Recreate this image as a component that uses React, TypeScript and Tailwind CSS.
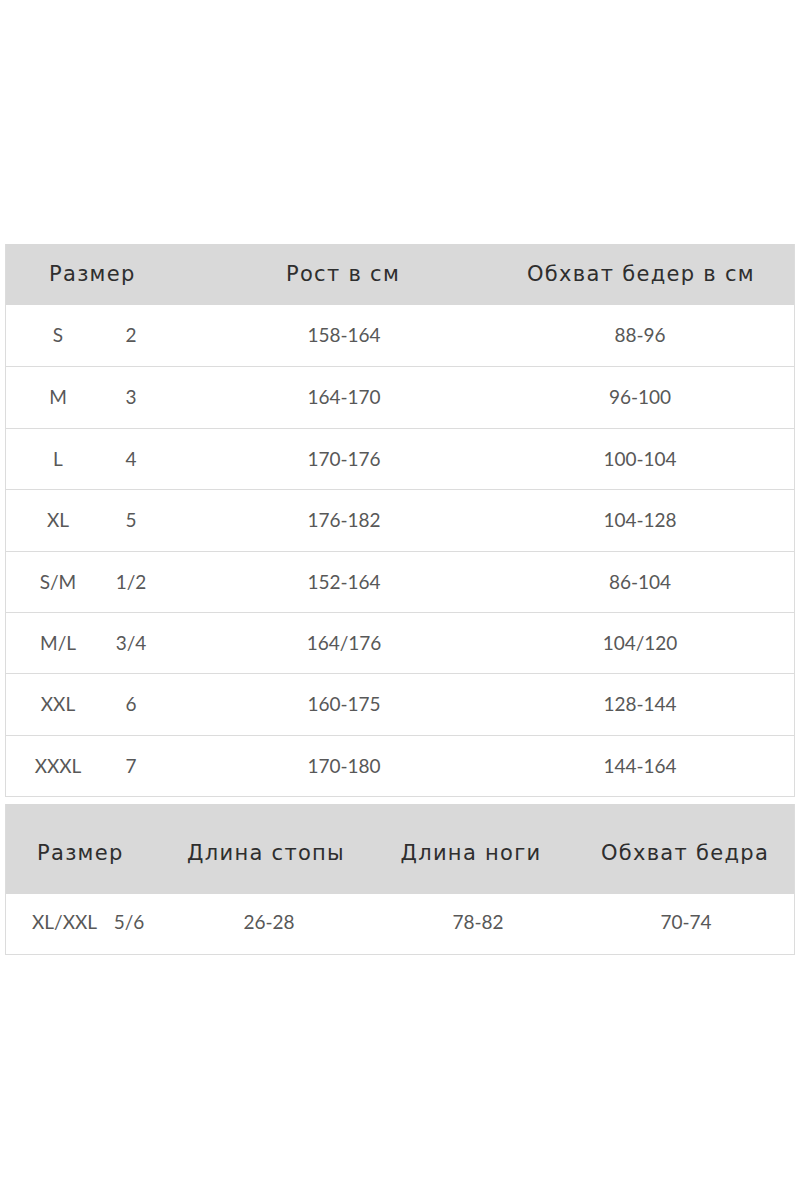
const rows = [
  { size: "S", num: "2", height: "158-164", hips: "88-96" },
  { size: "M", num: "3", height: "164-170", hips: "96-100" },
  { size: "L", num: "4", height: "170-176", hips: "100-104" },
  { size: "XL", num: "5", height: "176-182", hips: "104-128" },
  { size: "S/M", num: "1/2", height: "152-164", hips: "86-104" },
  { size: "M/L", num: "3/4", height: "164/176", hips: "104/120" },
  { size: "XXL", num: "6", height: "160-175", hips: "128-144" },
  { size: "XXXL", num: "7", height: "170-180", hips: "144-164" },
];

const head = "font-['DejaVu_Sans',sans-serif] text-[21px] text-[#2e2e2e] tracking-[1.3px] whitespace-nowrap";
const cell = "font-['Lato',sans-serif] text-[19px] text-[#585858]";

export default function App() {
  return (
    <div className="w-[800px] h-[1200px] bg-white pt-[244px] px-[5px]">
      {/* first table */}
      <div className="w-[790px] border-x border-b border-[#dcdcdc]">
        <div className={`grid grid-cols-[140px_380px_270px] h-[61px] items-center bg-[#d9d9d9] ${head}`}>
          <div className="pl-[43px]">Размер</div>
          <div className="text-center pl-[14px]">Рост в см</div>
          <div className="text-center pr-[40px]">Обхват бедер в см</div>
        </div>
        {rows.map((r, i) => (
          <div
            key={r.size}
            className={`grid grid-cols-[106px_44px_380px_210px] h-[61.4px] items-center ${cell} ${i > 0 ? "border-t border-[#dcdcdc]" : ""}`}
          >
            <div className="text-center pr-[2px]">{r.size}</div>
            <div className="text-center pr-[6px]">{r.num}</div>
            <div className="text-center pr-[4px]">{r.height}</div>
            <div className="text-center pr-[2px]">{r.hips}</div>
          </div>
        ))}
      </div>

      {/* second table */}
      <div className="w-[790px] mt-[7px] border-x border-b border-[#dcdcdc]">
        <div className={`grid grid-cols-[160px_204px_204px_222px] h-[90px] items-center pt-[10px] bg-[#d9d9d9] ${head}`}>
          <div className="pl-[31px]">Размер</div>
          <div className="text-center pr-[4px]">Длина стопы</div>
          <div className="text-center pr-[2px]">Длина ноги</div>
          <div className="text-center">Обхват бедра</div>
        </div>
        <div className={`grid grid-cols-[100px_50px_228px_188px_228px] h-[60px] items-center pb-[4px] ${cell}`}>
          <div className="pl-[26px]">XL/XXL</div>
          <div className="text-center pr-[4px]">5/6</div>
          <div className="text-center pr-[2px]">26-28</div>
          <div className="text-center">78-82</div>
          <div className="text-center">70-74</div>
        </div>
      </div>
    </div>
  );
}
